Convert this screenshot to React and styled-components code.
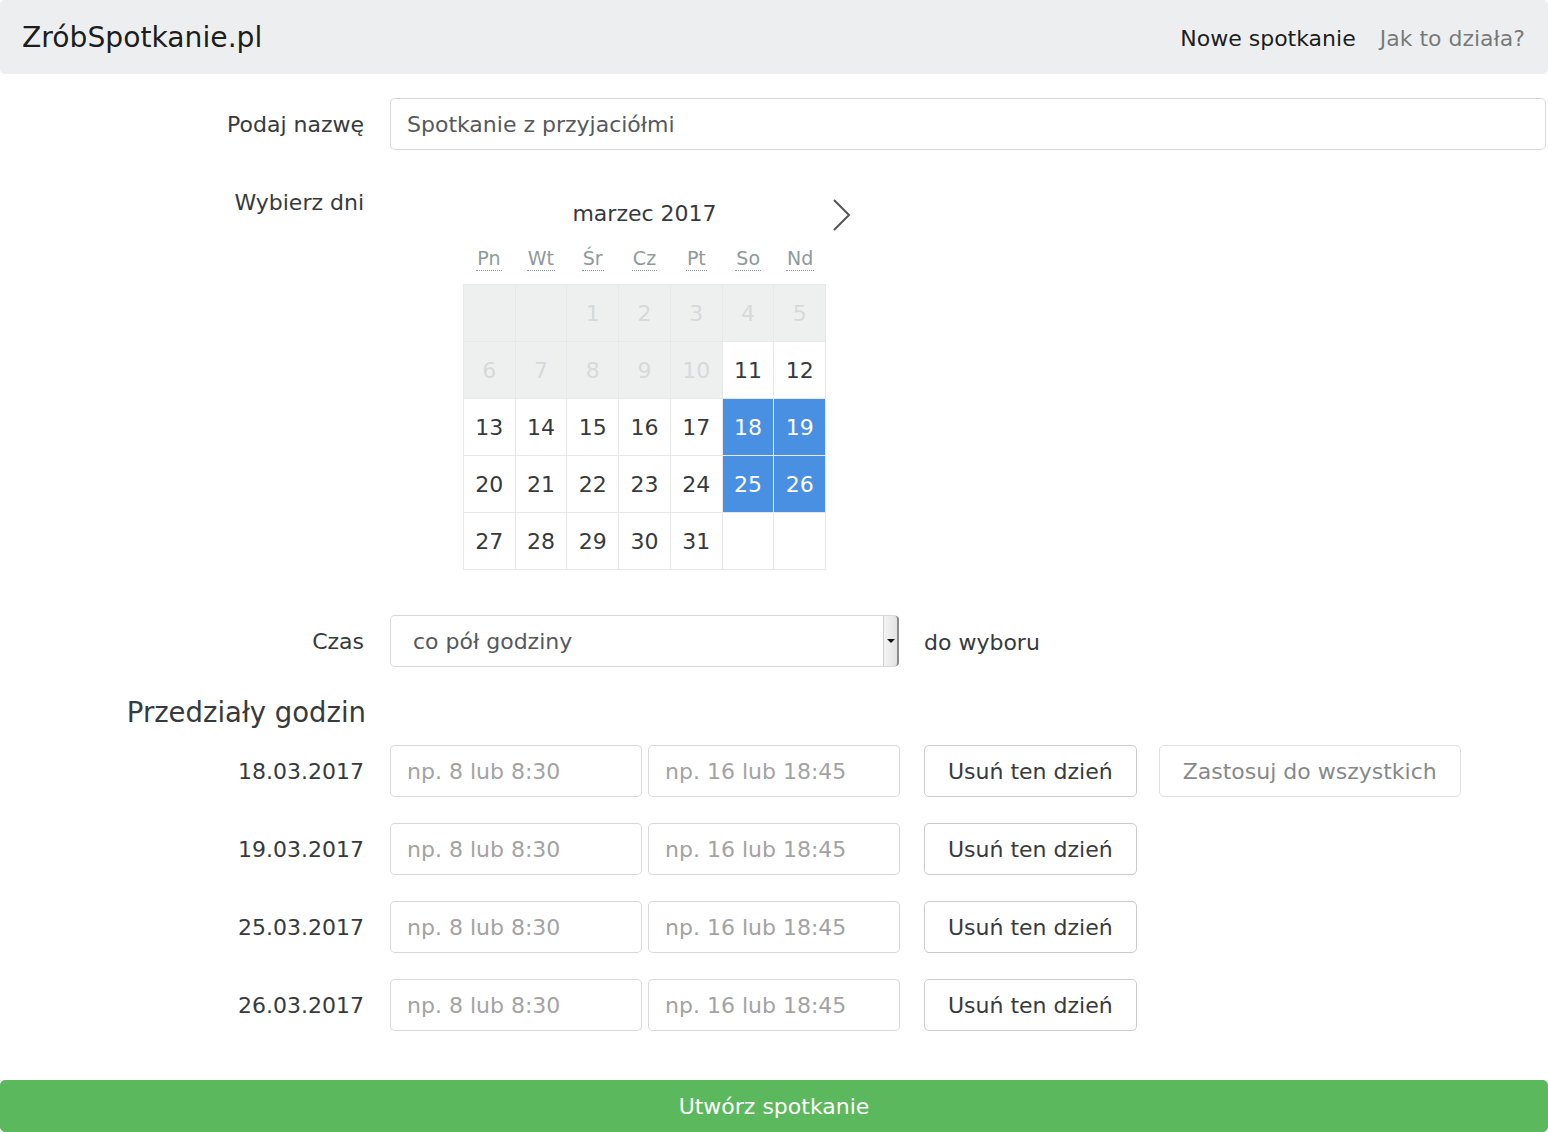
import React from "react";
import styled, { createGlobalStyle, css } from "styled-components";

const Global = createGlobalStyle`
  html, body { margin: 0; padding: 0; background: #fff; }
  body {
    font-family: "DejaVu Sans", "Liberation Sans", sans-serif;
    font-size: 22px;
    line-height: 1.5;
    color: #373a3c;
  }
  * { box-sizing: border-box; }
`;

const Page = styled.div`
  width: 1548px;
`;

const Navbar = styled.nav`
  height: 74px;
  background: #eceeef;
  border-radius: 5px;
  display: flex;
  align-items: center;
  justify-content: space-between;
  padding: 2px 23px 0 22px;
`;

const Brand = styled.a`
  font-size: 28.2px;
  color: rgba(0, 0, 0, 0.9);
  text-decoration: none;
`;

const NavLinks = styled.div`
  display: flex;
  gap: 24px;
`;

const NavLink = styled.a`
  color: ${(p) => (p.$active ? "rgba(0,0,0,0.9)" : "rgba(0,0,0,0.5)")};
  text-decoration: none;
  font-size: 22px;
`;

const Form = styled.form`
  padding: 24px 2px 0 0;
  display: flex;
  flex-direction: column;
`;

const Row = styled.div`
  display: grid;
  grid-template-columns: 390px 1fr;
  align-items: ${(p) => (p.$top ? "start" : "center")};
  margin-bottom: ${(p) => p.$mb || 0}px;
`;

const Label = styled.label`
  text-align: right;
  padding-right: 26px;
  padding-top: ${(p) => p.$pt || 0}px;
  font-size: 22px;
`;

const TextInput = styled.input`
  height: 52px;
  width: ${(p) => (p.$w ? `${p.$w}px` : "100%")};
  border: 1px solid rgba(0, 0, 0, 0.15);
  border-radius: 5px;
  padding: 0 16px;
  font-family: inherit;
  font-size: 22px;
  color: #55595c;
  background: #fff;
  outline: none;
  &::placeholder { color: #a3a3a3; }
`;

const CalendarCol = styled.div`
  padding: 16px 0 0 73px;
`;

const Calendar = styled.div`
  position: relative;
  width: 363px;
`;

const CalHeader = styled.div`
  height: 48px;
  line-height: 48px;
  text-align: center;
  font-size: 22px;
  color: #373a3c;
`;

const NextArrow = styled.button`
  position: absolute;
  right: -28px;
  top: 8px;
  width: 24px;
  height: 34px;
  padding: 0;
  border: 0;
  background: transparent;
  display: flex;
  align-items: center;
  justify-content: center;
`;

const Weekdays = styled.div`
  display: grid;
  grid-template-columns: repeat(7, 1fr);
  height: 46px;
  align-items: start;
  padding-top: 8px;
`;

const Weekday = styled.abbr`
  justify-self: center;
  font-size: 19px;
  color: #8e9a9b;
  text-decoration: none;
  border-bottom: 1px dotted #8e9a9b;
  line-height: 24px;
  padding: 0 1px;
`;

const DaysGrid = styled.div`
  display: grid;
  grid-template-columns: repeat(7, 1fr);
  grid-auto-rows: 56px;
  gap: 1px;
  background: #e7e9e9;
  border: 1px solid #e7e9e9;
  width: 363px;
`;

const Day = styled.div`
  display: flex;
  align-items: center;
  justify-content: center;
  font-size: 22px;
  background: #fff;
  color: #373a3c;
  ${(p) =>
    p.$disabled &&
    css`
      background: #eef0ef;
      color: #d6d9d9;
    `}
  ${(p) =>
    p.$selected &&
    css`
      background: #4a90e2;
      color: #fff;
    `}
`;

const SelectRow = styled.div`
  display: flex;
  align-items: center;
  gap: 25px;
`;

const SelectWrap = styled.div`
  position: relative;
  width: 509px;
  height: 52px;
`;

const Select = styled.select`
  appearance: none;
  width: 100%;
  height: 100%;
  border: 1px solid rgba(0, 0, 0, 0.15);
  border-radius: 5px;
  padding: 0 22px;
  font-family: inherit;
  font-size: 22px;
  color: #55595c;
  background: #fff;
  outline: none;
`;

const SelectButton = styled.span`
  position: absolute;
  right: 0;
  top: 1px;
  bottom: 1px;
  width: 16px;
  background: linear-gradient(to right, #f4f4f4, #e2e2e2);
  border-left: 1px solid #d0d0d0;
  border-right: 2px solid #8a8a8a;
  border-radius: 0 4px 4px 0;
  display: flex;
  align-items: center;
  justify-content: center;
  pointer-events: none;
  &::after {
    content: "";
    border-left: 4px solid transparent;
    border-right: 4px solid transparent;
    border-top: 4px solid #111;
  }
`;

const Plain = styled.span`
  font-size: 22px;
  padding-top: 2px;
`;

const Heading = styled.h4`
  font-size: 27.5px;
  font-weight: 400;
  line-height: 33px;
  text-align: right;
  width: 366px;
  margin: 29px 0 16px;
  color: #373a3c;
`;

const DayControls = styled.div`
  display: flex;
  align-items: center;
`;

const InputPair = styled.div`
  display: flex;
  gap: 6px;
  margin-right: 24px;
`;

const Button = styled.button`
  height: 52px;
  padding: 0 23px;
  border: 1px solid #ccc;
  border-radius: 5px;
  background: #fff;
  font-family: inherit;
  font-size: 22px;
  color: #373a3c;
  margin-right: 22px;
  ${(p) =>
    p.$disabled &&
    css`
      opacity: 0.6;
    `}
`;

const Submit = styled.button`
  margin-top: 49px;
  height: 52px;
  width: 1548px;
  border: 1px solid #5cb85c;
  border-radius: 5px;
  background: #5cb85c;
  color: #fff;
  font-family: inherit;
  font-size: 22px;
`;

const weekdays = ["Pn", "Wt", "Śr", "Cz", "Pt", "So", "Nd"];

const cells = [];
cells.push({ t: "", d: true }, { t: "", d: true });
for (let i = 1; i <= 10; i++) cells.push({ t: String(i), d: true });
for (let i = 11; i <= 31; i++)
  cells.push({ t: String(i), s: [18, 19, 25, 26].includes(i) });
cells.push({ t: "" }, { t: "" });

const dates = ["18.03.2017", "19.03.2017", "25.03.2017", "26.03.2017"];

export default function App() {
  return (
    <Page>
      <Global />
      <Navbar>
        <Brand href="#">ZróbSpotkanie.pl</Brand>
        <NavLinks>
          <NavLink $active href="#">Nowe spotkanie</NavLink>
          <NavLink href="#">Jak to działa?</NavLink>
        </NavLinks>
      </Navbar>
      <Form onSubmit={(e) => e.preventDefault()}>
        <Row $mb={24}>
          <Label>Podaj nazwę</Label>
          <TextInput defaultValue="Spotkanie z przyjaciółmi" />
        </Row>
        <Row $top $mb={45}>
          <Label $pt={12}>Wybierz dni</Label>
          <CalendarCol>
            <Calendar>
              <CalHeader>marzec 2017</CalHeader>
              <NextArrow type="button" aria-label="następny miesiąc">
                <svg width="20" height="34" viewBox="0 0 20 34">
                  <path d="M2 2 L17 17 L2 32" fill="none" stroke="#555" strokeWidth="2" />
                </svg>
              </NextArrow>
              <Weekdays>
                {weekdays.map((w) => (
                  <Weekday key={w} title={w}>{w}</Weekday>
                ))}
              </Weekdays>
              <DaysGrid>
                {cells.map((c, i) => (
                  <Day key={i} $disabled={c.d} $selected={c.s}>{c.t}</Day>
                ))}
              </DaysGrid>
            </Calendar>
          </CalendarCol>
        </Row>
        <Row>
          <Label>Czas</Label>
          <SelectRow>
            <SelectWrap>
              <Select defaultValue="30">
                <option value="30">co pół godziny</option>
                <option value="60">co godzinę</option>
              </Select>
              <SelectButton />
            </SelectWrap>
            <Plain>do wyboru</Plain>
          </SelectRow>
        </Row>
        <Heading>Przedziały godzin</Heading>
        {dates.map((d, i) => (
          <Row key={d} $mb={i < dates.length - 1 ? 26 : 0}>
            <Label>{d}</Label>
            <DayControls>
              <InputPair>
                <TextInput $w={252} placeholder="np. 8 lub 8:30" />
                <TextInput $w={252} placeholder="np. 16 lub 18:45" />
              </InputPair>
              <Button type="button">Usuń ten dzień</Button>
              {i === 0 && (
                <Button type="button" $disabled>Zastosuj do wszystkich</Button>
              )}
            </DayControls>
          </Row>
        ))}
        <Submit type="submit">Utwórz spotkanie</Submit>
      </Form>
    </Page>
  );
}
